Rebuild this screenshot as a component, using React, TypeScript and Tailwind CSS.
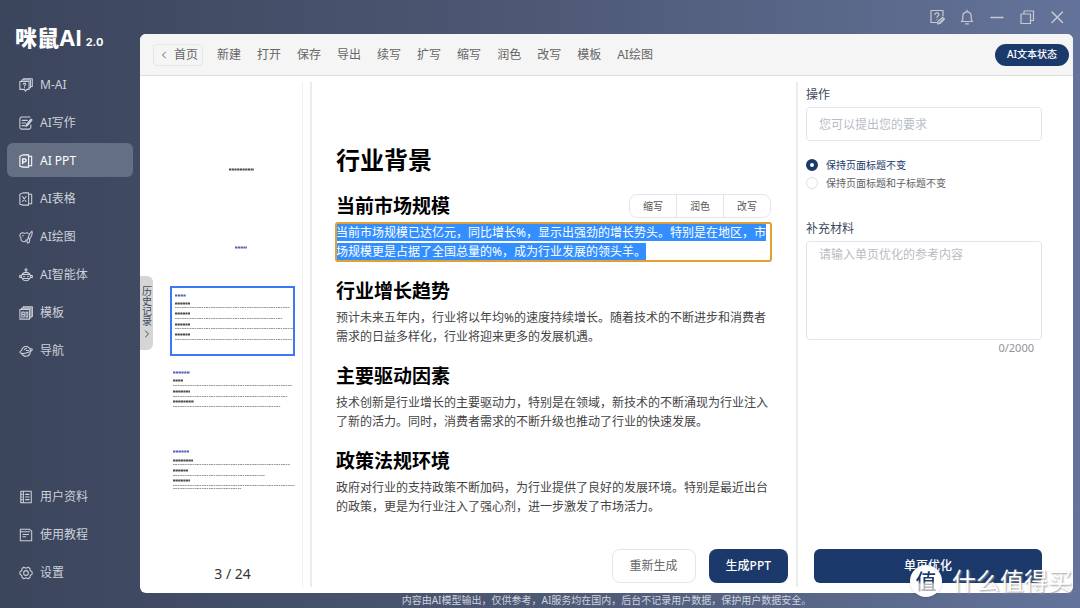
import React, { useState } from 'react';
import { ChevronLeft, ChevronRight } from 'lucide-react';

interface IconProps {
  children: React.ReactNode;
  className?: string;
}

function Icon({ children, className = 'w-3.5 h-3.5' }: IconProps) {
  return (
    <svg
      viewBox="0 0 16 16"
      fill="none"
      stroke="currentColor"
      strokeWidth="1.2"
      strokeLinecap="round"
      strokeLinejoin="round"
      aria-hidden="true"
      className={`shrink-0 ${className}`}
    >
      {children}
    </svg>
  );
}

const icons = {
  chat: (
    <Icon>
      <path d="M1 4h10.500v9H8.800L7.500 15.200 6 13H1z" />
      <path d="M3 4V2.200h10.200v9H11.500M5 2.200V.8h10.200v9h-2" />
      <path d="M4.900 7c.1-1.600 2.800-1.500 2.800 0 0 1-1.400.9-1.400 2M6.300 11v.1" />
    </Icon>
  ),
  write: (
    <Icon>
      <path d="M12.500 1.200H2.500L1 2.700V13.500L2.500 15H12l1.500-1.500V10" />
      <path d="M3.500 5h6M3.500 8h4M3.500 11h3" />
      <path d="M15 4.500 9.700 11l-2 1 .6-2.200L13.700 3.500z" fill="currentColor" />
    </Icon>
  ),
  ppt: (
    <Icon>
      <path d="M1 2.500 4.500 1H11v14H4.500L1 14zM11 2.500h3.500v11H11" />
      <path d="M4.200 11V5.500h2.300a1.700 1.700 0 0 1 0 3.400H4.200" strokeWidth="1.5" />
    </Icon>
  ),
  sheet: (
    <Icon>
      <path d="M1 2.500 4.500 1H11v14H4.500L1 14zM11 2.500h3.500v11H11" />
      <path d="m4 5.200 4 5.600M8 5.200l-4 5.600" />
    </Icon>
  ),
  paint: (
    <Icon>
      <path d="M10.500 3.800C9.500 2.500 8 3.500 7 3.800 5.500 4 4.500 2.800 3 3.500 1.300 4.200.6 6 1.200 7.300c.4 1 1.300 1.200 1 2.400-.4 2.500 2.300 4.300 4.500 3.500 1.200-.4.800-1.700 1.800-2" />
      <path d="M14.800 1.200c.7 3-.5 6.800-2.800 9.300L10.500 9c.5-2.900 2-6 4.300-7.800zM10.300 9.500l-1.500 3.500 1.300 2 1.700-1 .5-3.300" />
      <path d="M4.500 6.500h.1" strokeWidth="1.600" />
    </Icon>
  ),
  robot: (
    <Icon>
      <circle cx="8" cy="2" r="1.200" />
      <path d="M8 3.500V5M3.500 7.800C4 6 5.800 5 8 5s4 1 4.500 2.800" />
      <rect x="2.500" y="7.500" width="11" height="4.500" rx="2.200" />
      <path d="M2.500 8.500H.8v2.300h1.700M13.500 8.500h1.700v2.300h-1.700M4 12.500c1.800 2.800 6.200 2.800 8 0" />
      <path d="M5.700 9.700h.1M10.200 9.700h.1" strokeWidth="1.800" />
    </Icon>
  ),
  template: (
    <Icon>
      <path d="M1 4h11v11H1zM2.800 4V2.500h10.900v11H12M4.600 2.500V1h10.700v11h-1.600" />
      <path d="M3.200 7H6v5.500H3.200zM3.200 9.700H6M8 7h2v5.500H8z" />
    </Icon>
  ),
  nav: (
    <Icon>
      <path d="M3 7.500C3.500 4.500 5.500 2.800 8 2.800s4.600 1.700 5 4.700M3 7.500C1.500 8 .7 9 1.200 9.800c1.300 1.500 6.300 1.200 9.800-.3 2.500-1 4.700-2.500 4.200-3.500-.2-.6-1.200-.7-2.200-.5" />
      <path d="M3 10.800C4 13 6 14 8 14s4-1.200 5-4M6 6.500l2.500-1.700M8.500 7.500h2.500" />
    </Icon>
  ),
  profile: (
    <Icon>
      <path d="M2 1.500h12v13H2zM5 1.500v13M7.500 5h4M7.500 8h4M7.500 11h4M3 5h.5M3 8h.5M3 11h.5" />
    </Icon>
  ),
  tutorial: (
    <Icon>
      <path d="M1.500 1.500H12l2.500 2v11h-13zM1.500 4.200H12M4.500 7.500H11M4.500 10h3" />
    </Icon>
  ),
  settings: (
    <Icon>
      <path d="M5.500 1.500 8 2.500l2.500-1 2 1.300.3 2.400 2.200 1.500v2.600l-2.200 1.500-.3 2.400-2 1.300-2.500-1-2.500 1-2-1.300-.3-2.400L1 9.300V6.700l2.200-1.500.3-2.400z" />
      <circle cx="8" cy="8" r="2.700" />
    </Icon>
  ),
};

const mainNav = [
  { label: 'M-AI', icon: icons.chat },
  { label: 'AI写作', icon: icons.write },
  { label: 'AI PPT', icon: icons.ppt },
  { label: 'AI表格', icon: icons.sheet },
  { label: 'AI绘图', icon: icons.paint },
  { label: 'AI智能体', icon: icons.robot },
  { label: '模板', icon: icons.template },
  { label: '导航', icon: icons.nav },
];

const bottomNav = [
  { label: '用户资料', icon: icons.profile },
  { label: '使用教程', icon: icons.tutorial },
  { label: '设置', icon: icons.settings },
];

const tools = ['新建', '打开', '保存', '导出', '续写', '扩写', '缩写', '润色', '改写', '模板', 'AI绘图'];

const slide = {
  title: '行业背景',
  sections: [
    {
      heading: '当前市场规模',
      text: '当前市场规模已达亿元，同比增长%，显示出强劲的增长势头。特别是在地区，市场规模更是占据了全国总量的%，成为行业发展的领头羊。',
    },
    {
      heading: '行业增长趋势',
      text: '预计未来五年内，行业将以年均%的速度持续增长。随着技术的不断进步和消费者需求的日益多样化，行业将迎来更多的发展机遇。',
    },
    {
      heading: '主要驱动因素',
      text: '技术创新是行业增长的主要驱动力，特别是在领域，新技术的不断涌现为行业注入了新的活力。同时，消费者需求的不断升级也推动了行业的快速发展。',
    },
    {
      heading: '政策法规环境',
      text: '政府对行业的支持政策不断加码，为行业提供了良好的发展环境。特别是最近出台的政策，更是为行业注入了强心剂，进一步激发了市场活力。',
    },
  ],
};

// [x, y, width, kind] of each text run in a slide preview
type Run = [number, number, number, 'title' | 'heading' | 'text' | 'cover'];

const previews: Record<number, Run[]> = {
  1: [[59, 39, 25, 'cover']],
  2: [[65, 39, 12, 'title']],
  3: [
    [5, 9, 11, 'title'],
    [5, 17, 15, 'heading'],
    [5, 21, 115, 'text'],
    [5, 27, 15, 'heading'],
    [5, 32, 108, 'text'],
    [5, 38, 15, 'heading'],
    [5, 42, 118, 'text'],
    [5, 48, 15, 'heading'],
    [5, 53, 117, 'text'],
  ],
  4: [
    [3, 8, 17, 'title'],
    [3, 16, 10, 'heading'],
    [3, 21, 119, 'text'],
    [3, 27, 17, 'heading'],
    [3, 32, 115, 'text'],
    [3, 37, 21, 'heading'],
    [3, 42, 108, 'text'],
  ],
  5: [
    [3, 9, 16, 'title'],
    [3, 18, 20, 'heading'],
    [3, 22, 117, 'text'],
    [3, 28, 15, 'heading'],
    [3, 33, 92, 'text'],
    [3, 38, 17, 'heading'],
    [3, 43, 122, 'text'],
    [3, 46, 68, 'text'],
  ],
};

const runStyle = {
  cover: { stroke: '#4a4a4a', width: 2, dash: '2.2 0.5' },
  title: { stroke: '#5560b8', width: 2, dash: '2.3 0.5' },
  heading: { stroke: '#4c4c4c', width: 2, dash: '2.2 0.4' },
  text: { stroke: '#999999', width: 1, dash: '1.7 0.4 2.3 0.6 1.4 0.8' },
};

function SlidePreview({ runs }: { runs: Run[] }) {
  return (
    <svg viewBox="0 0 125 70" className="w-full h-full" aria-hidden="true">
      {runs.map(([x, y, w, kind], index) => (
        <line
          key={index}
          x1={x}
          x2={x + w}
          y1={y + 0.5}
          y2={y + 0.5}
          stroke={runStyle[kind].stroke}
          strokeWidth={runStyle[kind].width}
          strokeDasharray={runStyle[kind].dash}
        />
      ))}
    </svg>
  );
}

interface NavItemProps {
  label: string;
  icon: React.ReactNode;
  active?: boolean;
  onClick?: () => void;
}

function NavItem({ label, icon, active, onClick }: NavItemProps) {
  return (
    <button
      type="button"
      onClick={onClick}
      className={`flex items-center gap-[7px] h-[34px] w-full pl-3 pt-0.5 rounded-md text-[12px] ${
        active ? 'bg-[#656f83] text-white' : 'text-[#cdd1da]'
      }`}
    >
      {icon}
      {label}
    </button>
  );
}

function Sidebar() {
  const [active, setActive] = useState('AI PPT');

  return (
    <aside className="w-[140px] shrink-0 flex flex-col px-[7px] pt-[26px] pb-[19px]">
      <div className="flex items-baseline gap-1 pl-2 h-[41px] leading-6 text-white font-['Inter','Noto_Sans_CJK_SC',sans-serif]">
        <span className="text-[22px] font-black">
          咪鼠<span className="font-bold">AI</span>
        </span>
        <span className="text-[11px] font-bold">2.0</span>
      </div>
      <nav className="flex flex-col gap-1">
        {mainNav.map((item) => (
          <NavItem
            key={item.label}
            {...item}
            active={item.label === active}
            onClick={() => setActive(item.label)}
          />
        ))}
      </nav>
      <div className="mt-auto flex flex-col gap-1">
        {bottomNav.map((item) => (
          <NavItem key={item.label} {...item} />
        ))}
      </div>
    </aside>
  );
}

function TitleBar() {
  return (
    <div className="h-[34px] shrink-0 flex items-center justify-end gap-3.5 pr-2 text-[#c9cad0]">
      <button type="button" aria-label="帮助">
        <Icon className="w-4 h-4">
          <path d="M7.500 13.500H2V1.500h12V7" />
          <path d="M6 5.500c0-2.200 4-2 4 0C10 7 8 6.800 8 8.500M8 10.500v.1" />
          <path d="m9 12.500 4.500-4 2 1.500-4.500 4.500-2.500.3zM10.500 14l4-4" />
        </Icon>
      </button>
      <button type="button" aria-label="通知">
        <Icon className="w-4 h-4">
          <path d="M2.500 12.500h11l-1.300-2V7a4.200 4.200 0 0 0-8.400 0v3.500zM8 2.500V1.200M6.500 14.800h3" />
        </Icon>
      </button>
      <button type="button" aria-label="最小化">
        <Icon className="w-4 h-4">
          <path d="M2 8.500h12" strokeWidth="1.500" />
        </Icon>
      </button>
      <button type="button" aria-label="还原">
        <Icon className="w-4 h-4">
          <path d="M2 5h9.500v9.500H2zM5 5V2h9.500v9.500h-3" />
        </Icon>
      </button>
      <button type="button" aria-label="关闭">
        <Icon className="w-4 h-4">
          <path d="m3 3 10.500 10.500M13.500 3 3 13.500" strokeWidth="1.500" />
        </Icon>
      </button>
    </div>
  );
}

function Toolbar() {
  return (
    <header className="flex items-center h-[42px] shrink-0 pl-[13px] pr-1 bg-[#f5f5f5] border-b border-[#dedede] text-[12px] text-[#666666]">
      <button type="button" className="flex items-center gap-1 h-[22px] px-1 rounded border border-[#e6e6e6]">
        <ChevronLeft className="w-3 h-3" />
        首页
      </button>
      <div className="flex gap-4 pl-3.5">
        {tools.map((tool) => (
          <button key={tool} type="button">{tool}</button>
        ))}
      </div>
      <button type="button" className="ml-auto h-[22px] px-3 rounded-full bg-[#1b3a6b] text-[10px] font-medium text-white">
        AI文本状态
      </button>
    </header>
  );
}

function Thumbnails() {
  const [current, setCurrent] = useState(3);

  return (
    <div className="w-[163px] shrink-0 flex flex-col pl-[30px] pr-[7px] pt-12 pb-[3px] border-r border-[#f0f0f0]">
      <div className="flex flex-col gap-2">
        {[1, 2, 3, 4, 5].map((page) => (
          <button
            key={page}
            type="button"
            aria-label={`第${page}页`}
            onClick={() => setCurrent(page)}
            className={`h-[70px] ${page === current ? 'ring-2 ring-inset ring-[#3f76f3]' : ''}`}
          >
            <SlidePreview runs={previews[page]} />
          </button>
        ))}
      </div>
      <div className="mt-auto text-center text-[14px] leading-5 text-[#333333]">{current} / 24</div>
    </div>
  );
}

function Editor() {
  return (
    <main className="flex-1 min-w-0 ml-[7px] flex flex-col border-l-2 border-[#ebebeb] pl-6 pt-[62px] pb-1">
      <article className="pr-[25px]">
        <h1 className="text-[24px] leading-8 font-bold text-black mb-4">{slide.title}</h1>
        <div className="flex flex-col gap-4">
          {slide.sections.map((section, index) => (
            <section key={section.heading}>
              <div className="flex items-center justify-between h-7 mb-[3px]">
                <h2 className="text-[19px] leading-7 font-bold text-black">{section.heading}</h2>
                {index === 0 && (
                  <div className="flex h-6 rounded-lg border border-[#e4e4ec] divide-x divide-[#e4e4ec] text-[10px] text-[#555555]">
                    <button type="button" className="px-[13px]">缩写</button>
                    <button type="button" className="px-[13px]">润色</button>
                    <button type="button" className="px-[13px]">改写</button>
                  </div>
                )}
              </div>
              {index === 0 ? (
                <p className="rounded-xs text-[12px] leading-[19px] outline-2 -outline-offset-1 outline-[#e0a032]">
                  <span className="bg-[#338fff] text-white">{section.text}</span>
                </p>
              ) : (
                <p className="text-[12px] leading-[19px] text-[#444444]">{section.text}</p>
              )}
            </section>
          ))}
        </div>
      </article>
      <div className="mt-auto flex justify-end gap-[13px] pr-2 text-[12px]">
        <button type="button" className="h-[34px] px-[17px] rounded-lg border border-[#e4e4ec] text-[#666666]">
          重新生成
        </button>
        <button type="button" className="h-[34px] px-[17px] rounded-lg bg-[#1b3a6b] font-medium text-white">
          生成PPT
        </button>
      </div>
    </main>
  );
}

function OptimizePanel() {
  const [keep, setKeep] = useState('title');
  const [material, setMaterial] = useState('');

  const options = [
    { value: 'title', label: '保持页面标题不变' },
    { value: 'subtitle', label: '保持页面标题和子标题不变' },
  ];

  return (
    <div className="w-[277px] shrink-0 flex flex-col border-l-2 border-[#ebebeb] pl-2 pr-[31px] pt-[5px] pb-1 text-[12px] text-[#3d4a5c]">
      <label htmlFor="request" className="leading-4 mb-1">操作</label>
      <input
        id="request"
        type="text"
        placeholder="您可以提出您的要求"
        className="h-[34px] px-3 rounded border border-[#e2e4ea] placeholder:text-[#b8bcc6] outline-none"
      />
      <div className="flex flex-col pt-[15px] text-[10px]">
        {options.map((option) => (
          <label
            key={option.value}
            className={`flex items-center gap-2 h-[18px] ${
              keep === option.value ? 'text-[#1b3a6b]' : 'text-[#606266]'
            }`}
          >
            <input
              type="radio"
              name="keep"
              checked={keep === option.value}
              onChange={() => setKeep(option.value)}
              className="appearance-none w-3 h-3 rounded-full border border-[#dcdfe6] bg-white checked:border-4 checked:border-[#1b3a6b]"
            />
            {option.label}
          </label>
        ))}
      </div>
      <label htmlFor="material" className="leading-4 mt-[29px] mb-1">补充材料</label>
      <textarea
        id="material"
        value={material}
        maxLength={2000}
        onChange={(e) => setMaterial(e.target.value)}
        placeholder="请输入单页优化的参考内容"
        className="h-[99px] px-3 py-1 leading-[18px] rounded border border-[#e2e4ea] placeholder:text-[#b8bcc6] resize-none outline-none"
      />
      <div className="pr-2 text-right text-[11px] leading-4 text-[#909399]">{material.length}/2000</div>
      <button type="button" className="mt-auto ml-2 h-[34px] rounded-md bg-[#1b3a6b] font-medium text-white">
        单页优化
      </button>
    </div>
  );
}

function Watermark() {
  return (
    <div className="absolute right-2 bottom-[11px] flex items-center gap-2.5 pointer-events-none">
      <span className="flex items-center justify-center w-8 h-8 rounded-full bg-white shadow text-[21px] leading-8 font-medium">
        <span className="bg-linear-to-b from-[#1b3a6b] from-50% to-[#b4b4b4] to-60% bg-clip-text text-transparent">值</span>
      </span>
      <span className="text-[24px] leading-8 text-white [text-shadow:1px_1px_2px_#999999]">什么值得买</span>
    </div>
  );
}

export default function App() {
  return (
    <div
      lang="zh-CN"
      className="relative flex min-h-screen bg-linear-to-r from-[#3b455c] via-[#4d5975] to-[#64739a] font-['Noto_Sans','Noto_Sans_CJK_SC',sans-serif]"
    >
      <Sidebar />
      <div className="flex-1 min-w-0 flex flex-col pr-[7px]">
        <TitleBar />
        <div className="flex-1 flex flex-col rounded-md overflow-hidden bg-white">
          <Toolbar />
          <div className="relative flex-1 flex py-1.5">
            <Thumbnails />
            <Editor />
            <OptimizePanel />
            <button
              type="button"
              className="absolute left-0 top-[200px] h-[74px] w-[13px] flex flex-col items-center justify-center gap-0.5 rounded-r-md bg-[#d5d5d5] text-[10px] leading-[12px] text-[#3d4a5c]"
            >
              <span className="[writing-mode:vertical-rl]">历史记录</span>
              <ChevronRight className="w-3 h-3" />
            </button>
          </div>
        </div>
        <footer className="h-[15px] shrink-0 text-center text-[10px] leading-[14px] text-[#d0d3dc]">
          内容由AI模型输出，仅供参考，AI服务均在国内，后台不记录用户数据，保护用户数据安全。
        </footer>
      </div>
      <Watermark />
    </div>
  );
}
